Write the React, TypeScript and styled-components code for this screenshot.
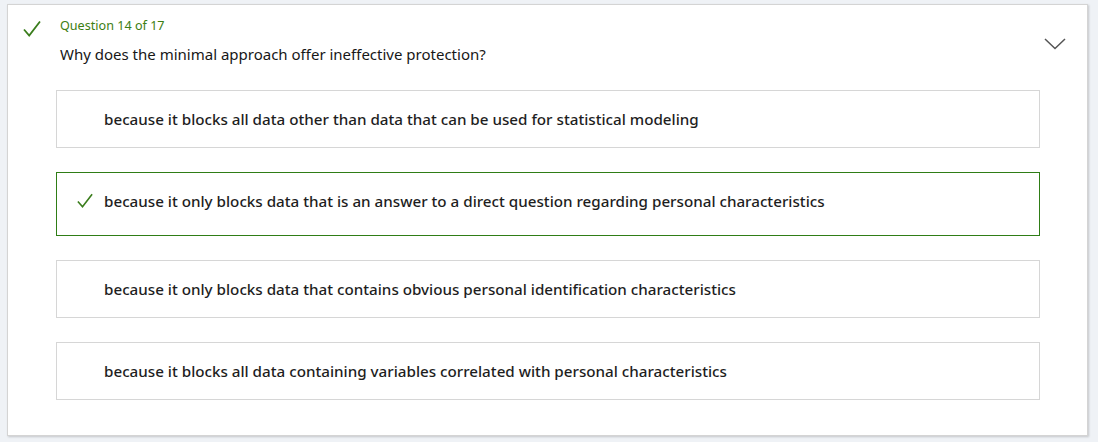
import React from 'react';
import styled, { createGlobalStyle } from 'styled-components';

const GlobalStyle = createGlobalStyle`
  body {
    margin: 0;
    background: #eff2f6;
    font-family: "Noto Sans", "Open Sans", sans-serif;
    color: #171717;
  }
`;

const Page = styled.div`
  padding: 4px 10px 6px 7px;
`;

const Card = styled.section`
  background: #ffffff;
  border: 1px solid #d4d4d4;
  box-shadow: 1px 1px 2px rgba(0, 0, 0, 0.18);
  padding: 13px 0 35px 0;
`;

const Header = styled.div`
  display: grid;
  grid-template-columns: 52px 1fr 60px;
  align-items: start;
`;

const StatusIcon = styled.div`
  padding: 2px 0 0 15px;
  height: 18px;
`;

const HeaderText = styled.div`
  display: flex;
  flex-direction: column;
  gap: 10px;
`;

const Counter = styled.div`
  font-size: 12.6px;
  line-height: 16px;
  color: #3c7e12;
`;

const Question = styled.div`
  font-size: 15px;
  line-height: 20px;
  color: #171717;
`;

const Toggle = styled.button`
  justify-self: end;
  border: none;
  background: none;
  padding: 0;
  margin: 20px 21px 0 0;
  width: 22px;
  height: 12px;
  display: flex;
  cursor: pointer;
`;

const Options = styled.ul`
  list-style: none;
  margin: 26px 47px 0 48px;
  padding: 0;
  display: flex;
  flex-direction: column;
  gap: 24px;
`;

const Option = styled.li<{ $correct?: boolean }>`
  display: flex;
  align-items: center;
  min-height: 56px;
  border: 1px solid ${(p) => (p.$correct ? '#2f7d16' : '#d6d6d6')};
  padding: 0 0 ${(p) => (p.$correct ? '6px' : '0')} 20px;
  font-size: 15.2px;
  font-weight: 500;
  color: #1e1e1e;
`;

const Mark = styled.span`
  width: 27px;
  flex: none;
  display: flex;
  align-items: center;
`;

const Check = ({ size }: { size: number }) => (
  <svg width={size} height={size} viewBox="0 0 18 18" fill="none">
    <path d="M1 9.5 L6.2 15.5 L17 1.5" stroke="#3a7d1c" strokeWidth="1.8" />
  </svg>
);

const answers = [
  { text: 'because it blocks all data other than data that can be used for statistical modeling', correct: false },
  { text: 'because it only blocks data that is an answer to a direct question regarding personal characteristics', correct: true },
  { text: 'because it only blocks data that contains obvious personal identification characteristics', correct: false },
  { text: 'because it blocks all data containing variables correlated with personal characteristics', correct: false },
];

function App() {
  return (
    <Page>
      <GlobalStyle />
      <Card>
        <Header>
          <StatusIcon>
            <Check size={18} />
          </StatusIcon>
          <HeaderText>
            <Counter>Question 14 of 17</Counter>
            <Question>Why does the minimal approach offer ineffective protection?</Question>
          </HeaderText>
          <Toggle aria-label="Collapse">
            <svg width="22" height="12" viewBox="0 0 22 12" fill="none">
              <path d="M1 1 L11 10.5 L21 1" stroke="#555555" strokeWidth="1.5" />
            </svg>
          </Toggle>
        </Header>
        <Options>
          {answers.map((a, i) => (
            <Option key={i} $correct={a.correct}>
              <Mark>{a.correct && <Check size={16} />}</Mark>
              <span>{a.text}</span>
            </Option>
          ))}
        </Options>
      </Card>
    </Page>
  );
}

export default App;
